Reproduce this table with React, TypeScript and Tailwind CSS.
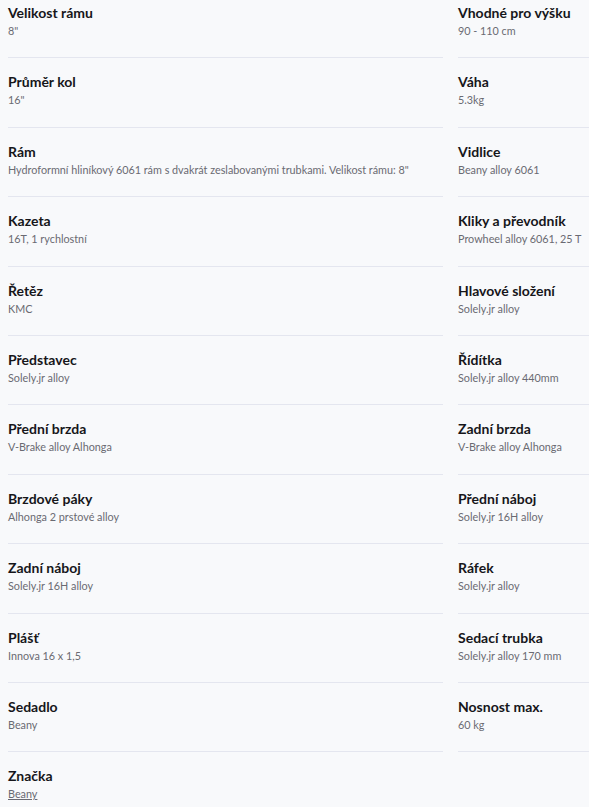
const left = [
  { label: 'Velikost rámu', value: '8"' },
  { label: 'Průměr kol', value: '16"' },
  { label: 'Rám', value: 'Hydroformní hliníkový 6061 rám s dvakrát zeslabovanými trubkami. Velikost rámu: 8"' },
  { label: 'Kazeta', value: '16T, 1 rychlostní' },
  { label: 'Řetěz', value: 'KMC' },
  { label: 'Představec', value: 'Solely.jr alloy' },
  { label: 'Přední brzda', value: 'V-Brake alloy Alhonga' },
  { label: 'Brzdové páky', value: 'Alhonga 2 prstové alloy' },
  { label: 'Zadní náboj', value: 'Solely.jr 16H alloy' },
  { label: 'Plášť', value: 'Innova 16 x 1,5' },
  { label: 'Sedadlo', value: 'Beany' },
  { label: 'Značka', value: 'Beany', link: true },
]

const right = [
  { label: 'Vhodné pro výšku', value: '90 - 110 cm' },
  { label: 'Váha', value: '5.3kg' },
  { label: 'Vidlice', value: 'Beany alloy 6061' },
  { label: 'Kliky a převodník', value: 'Prowheel alloy 6061, 25 T' },
  { label: 'Hlavové složení', value: 'Solely.jr alloy' },
  { label: 'Řídítka', value: 'Solely.jr alloy 440mm' },
  { label: 'Zadní brzda', value: 'V-Brake alloy Alhonga' },
  { label: 'Přední náboj', value: 'Solely.jr 16H alloy' },
  { label: 'Ráfek', value: 'Solely.jr alloy' },
  { label: 'Sedací trubka', value: 'Solely.jr alloy 170 mm' },
  { label: 'Nosnost max.', value: '60 kg' },
]

type Spec = { label: string; value: string; link?: boolean }

function SpecRow({ spec }: { spec: Spec }) {
  return (
    <div className="h-[69.4px] pt-[14px] border-b border-[#e4e6ef]">
      <div className="text-[14px] leading-[20px] font-bold text-[#16161a]">{spec.label}</div>
      <div className="text-[10.8px] leading-[16px] text-[#6a6a72] whitespace-nowrap">
        {spec.link ? <a href="#" className="underline">{spec.value}</a> : spec.value}
      </div>
    </div>
  )
}

export default function App() {
  return (
    <div
      className="w-[589px] h-[807px] overflow-hidden bg-[#f8f9fb]"
      style={{ fontFamily: '"Lato", "Open Sans", sans-serif' }}
    >
      <div className="-mt-[11px] pl-2 flex gap-[15px]">
        <div className="w-[435px] shrink-0">
          {left.map((s) => (
            <SpecRow key={s.label} spec={s} />
          ))}
        </div>
        <div className="w-[435px] shrink-0">
          {right.map((s) => (
            <SpecRow key={s.label} spec={s} />
          ))}
        </div>
      </div>
    </div>
  )
}
